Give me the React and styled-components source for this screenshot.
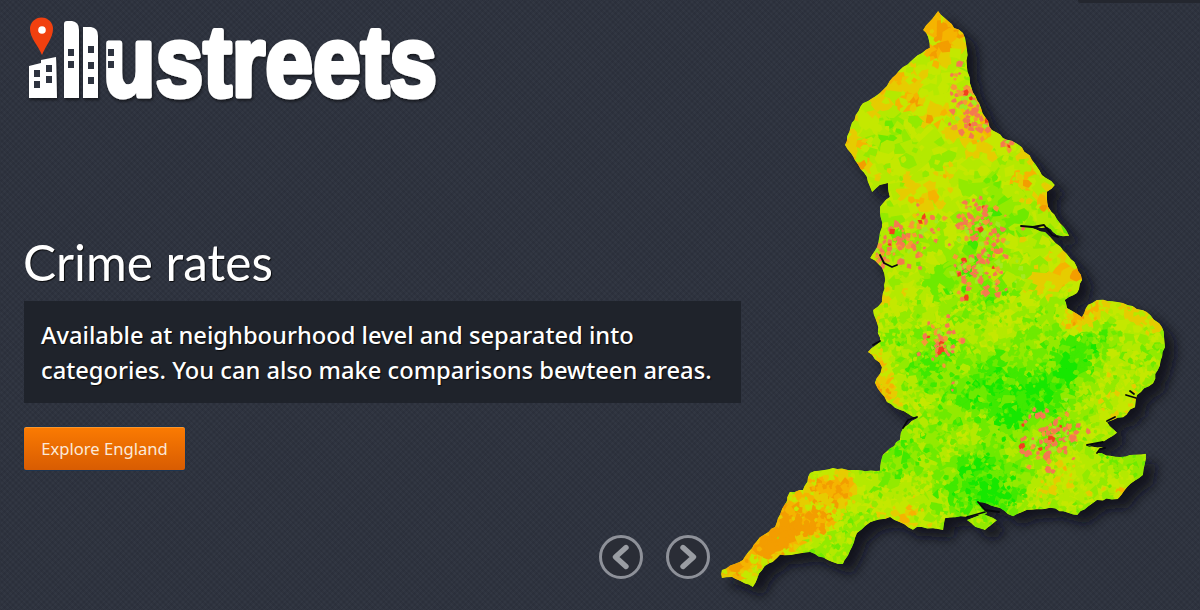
import React, { useMemo } from "react";
import styled, { createGlobalStyle } from "styled-components";

const Global = createGlobalStyle`
  html, body { margin: 0; padding: 0; background: #2e333f; }
`;

const Hero = styled.main`
  position: relative;
  width: 1200px;
  height: 610px;
  overflow: hidden;
  box-sizing: border-box;
  padding: 0 0 0 24px;
  display: flex;
  flex-direction: column;
  align-items: flex-start;
  color: #fff;
  background-color: #2e333f;
  background-image:
    repeating-linear-gradient(45deg, rgba(0,0,0,.07) 0 2px, transparent 2px 4px),
    repeating-linear-gradient(-45deg, rgba(255,255,255,.018) 0 2px, transparent 2px 4px);
`;

const TopTab = styled.div`
  position: absolute;
  top: 0;
  right: 0;
  width: 122px;
  height: 3px;
  background: #24272f;
  border-bottom-left-radius: 3px;
`;

const LogoMark = styled.svg`
  display: block;
  margin: 14px 0 0 -4px;
  width: 424px;
  height: 90px;
  overflow: visible;
`;

const Title = styled.h1`
  margin: 128px 0 0 -1px;
  font-family: Lato, "Liberation Sans", sans-serif;
  font-weight: 400;
  font-size: 49.6px;
  line-height: 60px;
  text-shadow: 1px 1px 1px rgba(0,0,0,.8);
`;

const Panel = styled.p`
  box-sizing: border-box;
  margin: 9px 0 0;
  width: 717px;
  height: 102px;
  padding: 17px 17px 15px;
  background: #1f232b;
  font-family: "Noto Sans", "Open Sans", sans-serif;
  font-size: 23.7px;
  font-weight: 500;
  line-height: 35px;
  text-shadow: 1px 1px 1px rgba(0,0,0,.7);
`;

const Cta = styled.button`
  margin: 23px 0 0 -1px;
  box-sizing: border-box;
  width: 163px;
  height: 45px;
  padding: 0;
  border: 1px solid #1d3550;
  border-radius: 3px;
  color: #fbe9d8;
  background: linear-gradient(#fb7b02, #d85c02);
  font-family: "Noto Sans", sans-serif;
  font-size: 16.6px;
  box-shadow: inset 0 1px 0 rgba(255,200,120,.35);
`;

const Controls = styled.nav`
  position: absolute;
  left: 599px;
  top: 535px;
  display: flex;
  gap: 23px;
`;

const Arrow = styled.button`
  box-sizing: border-box;
  width: 44px;
  height: 44px;
  padding: 0;
  border: 3px solid #8e9199;
  border-radius: 50%;
  background: #2a2d36;
  display: flex;
  align-items: center;
  justify-content: center;
`;

const MapSvg = styled.svg`
  position: absolute;
  right: 0;
  top: 0;
  width: 500px;
  height: 610px;
`;

const OUTLINE = [
  [938,11],[945,18],[954,28],[963,33],[967,50],[967,67],[970,83],[977,100],[985,117],[992,130],[1003,138],[1012,141],[1022,147],[1032,160],[1042,175],[1055,185],[1047,192],[1048,207],[1060,223],[1069,236],[1057,235],[1047,227],[1027,227],[1045,232],[1050,237],[1063,250],[1077,267],[1082,280],[1077,293],[1065,300],[1067,308],[1082,317],[1088,305],[1097,300],[1123,303],[1147,312],[1162,327],[1165,347],[1158,370],[1153,383],[1137,395],[1135,407],[1123,417],[1107,422],[1117,433],[1103,442],[1087,447],[1103,447],[1097,453],[1120,457],[1146,454],[1143,475],[1127,487],[1118,499],[1097,500],[1077,515],[1050,508],[1027,510],[1013,516],[1000,508],[978,502],[987,513],[967,517],[945,518],[943,530],[933,528],[917,527],[913,530],[890,517],[870,522],[857,533],[852,547],[843,564],[832,562],[810,552],[780,555],[762,570],[753,587],[732,577],[722,578],[722,570],[743,560],[760,537],[775,527],[790,492],[803,490],[810,473],[833,468],[857,470],[880,471],[883,455],[900,440],[903,428],[917,418],[900,410],[887,402],[875,383],[882,367],[868,352],[880,342],[877,323],[873,310],[882,302],[883,293],[885,280],[882,268],[870,258],[877,247],[882,227],[880,207],[890,197],[888,183],[880,185],[872,192],[867,177],[855,160],[845,145],[852,123],[863,103],[880,93],[903,67],[930,48],[928,37],[923,30]
];
const WIGHT = [[967,520],[983,513],[997,520],[985,530],[975,527]];

function rng(a) {
  return () => {
    a |= 0; a = (a + 0x6d2b79f5) | 0;
    let t = Math.imul(a ^ (a >>> 15), 1 | a);
    t = (t + Math.imul(t ^ (t >>> 7), 61 | t)) ^ t;
    return ((t ^ (t >>> 14)) >>> 0) / 4294967296;
  };
}

const roughen = (poly, seed) => {
  const rand = rng(seed);
  const out = [];
  poly.forEach((p, i) => {
    const q = poly[(i + 1) % poly.length];
    const len = Math.hypot(q[0] - p[0], q[1] - p[1]);
    const n = Math.max(1, Math.round(len / 5));
    for (let k = 0; k < n; k++) {
      const t = k / n;
      const j = k === 0 ? 0.2 : 1;
      out.push([
        +(p[0] + (q[0] - p[0]) * t + (rand() - .5) * j * 2).toFixed(1),
        +(p[1] + (q[1] - p[1]) * t + (rand() - .5) * j * 2).toFixed(1)
      ]);
    }
  });
  return out;
};

const toD = (p) => "M" + p.map((q) => q.join(",")).join("L") + "Z";

const inside = (x, y, poly) => {
  let c = false;
  for (let i = 0, j = poly.length - 1; i < poly.length; j = i++) {
    const [xi, yi] = poly[i], [xj, yj] = poly[j];
    if (yi > y !== yj > y && x < ((xj - xi) * (y - yi)) / (yj - yi) + xi) c = !c;
  }
  return c;
};

const MAP_D = toD(roughen(OUTLINE, 5)) + toD(roughen(WIGHT, 9));

// x, y, radius, weight
const WARM = [
  [942,35,24,.5],[938,60,14,.35],[912,105,8,.42],[932,122,11,.42],[893,85,10,.3],[860,140,10,.25],[865,170,8,.3],
  [1025,190,15,.4],[1050,205,12,.32],[1078,280,13,.5],[1076,322,17,.55],[1100,312,18,.28],[1130,310,14,.22],
  [1050,290,10,.22],[880,362,14,.45],[888,392,16,.42],[930,305,8,.22],[1125,490,9,.4],
  [840,490,20,.55],[790,525,28,.65],[824,525,16,.5],[770,545,16,.55],[735,570,14,.55],[815,490,12,.3],[905,518,12,.22],[983,520,9,.28]
];
const COOL = [
  [1000,385,50,-.34],[1067,380,28,-.28],[983,483,36,-.3],[1080,345,26,-.18],[1000,210,30,-.16],[940,430,30,-.18],
  [900,470,22,-.12],[880,150,12,-.08],[960,170,18,-.08]
];
const URBAN = [
  [965,95,16,.6],[972,120,15,.65],[985,135,7,.8],[1005,142,6,.85],
  [905,240,18,.6],[925,230,16,.55],[880,255,8,.75],[975,222,18,.55],[995,245,18,.6],[975,272,18,.65],[998,275,13,.55],
  [942,343,13,.9],[1057,437,18,.9],[1035,445,14,.4],[1030,410,8,.2],[955,385,5,.4],[1045,175,5,.3]
];

const PAL = ["#14e800","#3fe900","#6eea00","#93ea00","#b4e900","#c4e800","#e6cc00","#f5b400","#f39d05"];
const colour = (v) => PAL[Math.max(0, Math.min(PAL.length - 1, Math.round(v * (PAL.length - 1))))];

const gauss = (x, y, [hx, hy, r, w]) => {
  const d = ((x - hx) ** 2 + (y - hy) ** 2) / (r * r);
  return w * Math.exp(-d);
};

const blob = (x, y, r, rand) => {
  const n = 4 + Math.floor(rand() * 3);
  const pts = [];
  const off = rand() * 6.28;
  for (let i = 0; i < n; i++) {
    const a = off + (i / n) * 6.283;
    const k = r * (0.6 + rand() * 0.8);
    pts.push((x + Math.cos(a) * k).toFixed(1) + "," + (y + Math.sin(a) * k).toFixed(1));
  }
  return "M" + pts.join("L") + "Z";
};

const level = (x, y) => {
  let v = 0.45
    + 0.08 * Math.sin(x / 23 + y / 41)
    + 0.07 * Math.sin(y / 17 - x / 37 + 2)
    + 0.05 * Math.sin((x + y) / 11);
  if (y < 210) v += 0.14;
  for (const h of WARM) v += gauss(x, y, h);
  for (const h of COOL) v += gauss(x, y, h);
  return v;
};

const buildCells = () => {
  const rand = rng(71);
  const out = [];
  const near = (x, y) => inside(x, y, OUTLINE) || inside(x, y, WIGHT) ||
    inside(x + 6, y, OUTLINE) || inside(x - 6, y, OUTLINE) || inside(x, y + 6, OUTLINE) || inside(x, y - 6, OUTLINE);
  const layer = (step, rMin, rMax, keep, north, amp) => {
    for (let gy = 5; gy < 600; gy += step) {
      for (let gx = 715; gx < 1175; gx += step) {
        const x = gx + (rand() - .5) * step, y = gy + (rand() - .5) * step;
        if (!near(x, y)) continue;
        if (rand() > (y < 290 ? north : keep)) continue;
        const v = level(x, y) + (rand() - .5) * amp;
        out.push({ d: blob(x, y, (rMin + rand() * (rMax - rMin)) * (y < 290 ? 1.3 : 1), rand), c: colour(v) });
      }
    }
  };
  layer(12, 10, 14, 1, 1, .24);
  layer(6, 4, 6.5, .75, .35, .34);
  layer(4, 1.8, 3.2, .35, .1, .42);
  for (let gy = 5; gy < 600; gy += 3) {
    for (let gx = 715; gx < 1175; gx += 3) {
      const x = gx + (rand() - .5) * 3, y = gy + (rand() - .5) * 3;
      if (!inside(x, y, OUTLINE)) continue;
      let p = 0;
      for (const h of URBAN) p = Math.max(p, gauss(x, y, h));
      if (rand() > p * 0.8) continue;
      const hot = rand();
      out.push({
        d: blob(x, y, 1.6 + rand() * 2, rand),
        c: hot < .06 ? "#f2401c" : hot < .58 ? "#f47a50" : hot < .8 ? "#f59a35" : "#a4e820"
      });
    }
  }
  return out;
};

const RIVERS = [
  "M1021,226 L1033,227 L1044,225 L1052,235 L1058,237",
  "M880,255 L884,263 L892,267 L897,265",
  "M903,428 L908,420 L917,417",
  "M1087,445 L1098,443 L1103,442",
  "M1097,453 L1100,449 L1105,448",
  "M1107,421 L1115,417",
  "M978,502 L985,510 L999,512 M967,517 L985,512",
  "M1126,395 L1136,398 M1130,391 L1134,394",
  "M873,345 L880,341"
];

const EnglandMap = () => {
  const cells = useMemo(buildCells, []);
  return (
    <MapSvg viewBox="700 0 500 610" aria-label="Map of England">
      <defs>
        <clipPath id="england"><path d={MAP_D} /></clipPath>
        <filter id="soft" x="-5%" y="-5%" width="110%" height="110%"><feGaussianBlur stdDeviation="0.6" /></filter>
        <filter id="cast" x="-10%" y="-10%" width="125%" height="125%"><feGaussianBlur stdDeviation="6" /></filter>
      </defs>
      <path d={MAP_D} fill="#0b0d12" opacity=".85" transform="translate(10 9)" filter="url(#cast)" />
      <g clipPath="url(#england)">
        <path d={MAP_D} fill="#9fe900" />
        <g filter="url(#soft)">
          {cells.map((c, i) => <path key={i} d={c.d} fill={c.c} />)}
        </g>
      </g>
      <g fill="none" stroke="#07080c" strokeWidth="1.8" strokeLinecap="round" strokeLinejoin="round">
        {RIVERS.map((d) => <path key={d} d={d} />)}
      </g>
    </MapSvg>
  );
};

const Windows = ({ items }) => (
  <g fill="#2e333f">
    {items.map(([x, y]) => <rect key={x + "-" + y} x={x} y={y} width="6" height="7" />)}
  </g>
);

const Logo = () => (
  <LogoMark viewBox="20 14 424 90" aria-label="illustreets logo">
    <defs>
      <filter id="lift" x="-5%" y="-10%" width="110%" height="125%">
        <feDropShadow dx="1" dy="2" stdDeviation="1.5" floodColor="#000" floodOpacity=".55" />
      </filter>
    </defs>
    <g filter="url(#lift)">
      <path d="M29,66 L41,63 L41,60 L56,57 L57,98 L29,98 Z" fill="#fff" />
      <path d="M64,24 Q64,21 67,21 L72,21 Q79,22 79,30 L79,98 L64,98 Z" fill="#fff" />
      <path d="M83,27 L91,27 Q98,28 98,36 L98,98 L83,98 Z" fill="#fff" />
      <text
        x="103" y="96" fill="#fff" stroke="#fff" strokeWidth="5" strokeLinejoin="round"
        fontFamily="'Liberation Sans', sans-serif" fontWeight="700" fontSize="101"
        textLength="334" lengthAdjust="spacingAndGlyphs"
      >ustreets</text>
    </g>
    <Windows items={[[34,70],[46,65],[34,81],[46,76],[68,49],[68,61],[88,46],[88,62],[88,77],[108,49],[108,61]]} />
    <path d="M42,55 C38,45 30,38 30,29 A11.5,11.5 0 0 1 53,29 C53,38 46,45 42,55 Z" fill="#f1400f" />
    <circle cx="42" cy="30" r="3.8" fill="#fff" />
  </LogoMark>
);

const Chevron = ({ dir }) => (
  <svg width="24" height="28" viewBox="-12 -14 24 28" aria-hidden="true">
    <path
      d={dir === "left" ? "M5,-9.5 L-5.5,0 L5,9.5" : "M-5,-9.5 L5.5,0 L-5,9.5"}
      fill="none" stroke="#9a9da3" strokeWidth="5.4" strokeLinecap="round" strokeLinejoin="round"
    />
  </svg>
);

export default function App() {
  return (
    <Hero>
      <Global />
      <TopTab />
      <EnglandMap />
      <Logo />
      <Title>Crime rates</Title>
      <Panel>
        Available at neighbourhood level and separated into<br />
        categories. You can also make comparisons bewteen areas.
      </Panel>
      <Cta>Explore England</Cta>
      <Controls>
        <Arrow aria-label="Previous"><Chevron dir="left" /></Arrow>
        <Arrow aria-label="Next"><Chevron dir="right" /></Arrow>
      </Controls>
    </Hero>
  );
}
